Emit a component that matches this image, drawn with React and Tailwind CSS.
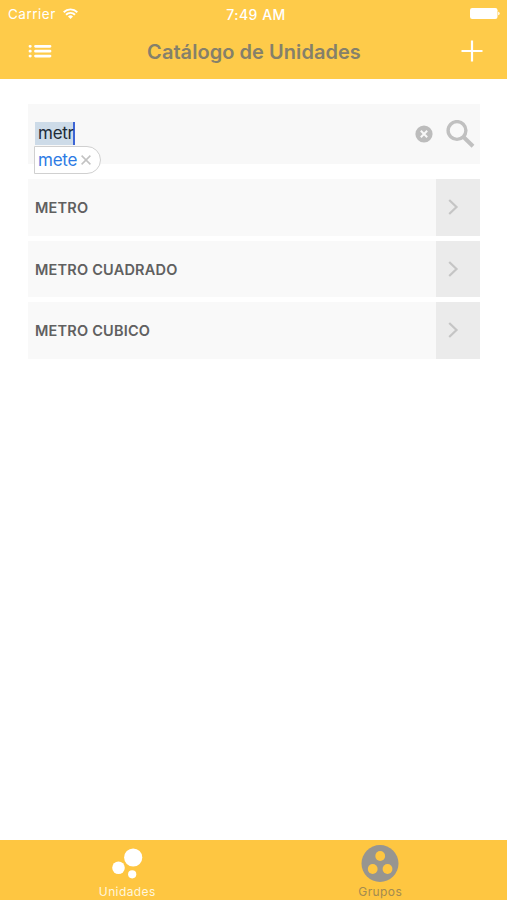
import React, { useState } from 'react';

const units = ['METRO', 'METRO CUADRADO', 'METRO CUBICO'];

const StatusBar = () => (
  <div className="flex h-7 items-center justify-between pl-2 pr-[7px] text-white">
    <div className="flex w-[120px] items-center gap-[7px]">
      <span className="text-[13.5px] tracking-[0.5px]">Carrier</span>
      <svg className="mb-px h-[11px] w-[15px]" viewBox="0 0 15 11" fill="none" stroke="currentColor" strokeWidth="1.9">
        <path d="M.7 4.2a9.7 9.7 0 0 1 13.6 0" />
        <path d="M3 6.7a6.4 6.4 0 0 1 9 0" />
        <path d="M7.5 11 5 8.4a3.6 3.6 0 0 1 5 0z" fill="currentColor" stroke="none" />
      </svg>
    </div>
    <span className="ml-1 text-[14px] font-medium tracking-[0.5px]">7:49 AM</span>
    <div className="flex w-[120px] justify-end">
      <svg className="mb-px h-[11px] w-[30px]" viewBox="0 0 30 11" fill="currentColor">
        <rect width="27.5" height="11" rx="2.2" />
        <path d="M28.2 3.8c2 .5 2 2.9 0 3.4z" />
      </svg>
    </div>
  </div>
);

const NavBar = () => (
  <div className="flex h-[51px] items-start justify-between pl-7 pr-6 text-white">
    <button type="button" className="mt-4 h-[15px] w-6">
      <svg className="h-[15px] w-6" viewBox="0 0 24 15" fill="none" stroke="currentColor" strokeWidth="2.8" strokeLinecap="round">
        <path d="M2 2.3h.3M2 7.2h.3M2 12.1h.3M7.5 2.3h14.5M7.5 7.2h14.5M7.5 12.1h14.5" />
      </svg>
    </button>
    <h1 className="mt-3 mr-[5px] text-[20px] leading-6 font-semibold tracking-[0.05px] text-[#85806a]">Catálogo de Unidades</h1>
    <button type="button" className="mt-3 h-[22px] w-[22px]">
      <svg className="h-[22px] w-[22px]" viewBox="0 0 22 22" fill="none" stroke="currentColor" strokeWidth="2.2">
        <path d="M11 .5v21M.5 11h21" />
      </svg>
    </button>
  </div>
);

const SearchBox = () => {
  const [query, setQuery] = useState('metr');

  return (
    <div className="relative flex h-[60px] items-start bg-[#f8f8f8] pl-[7px]">
      <div className="mt-[18px] flex h-[23px] items-center border-r-2 border-[#3d65d5] bg-[#cddbe8] pl-[3px]">
        <span className="mr-[-0.5px] text-[17px] leading-[23px] tracking-[-0.25px] text-[#202b38]">{query}</span>
      </div>
      <button type="button" onClick={() => setQuery('')} className="mt-[21px] ml-auto h-[18px] w-[18px]">
        <svg className="h-[18px] w-[18px]" viewBox="0 0 18 18">
          <circle cx="9" cy="9" r="8.6" fill="#bcbcbc" />
          <path d="m5.8 5.8 6.4 6.4m0-6.4-6.4 6.4" stroke="#f8f8f8" strokeWidth="2" />
        </svg>
      </button>
      <svg className="mt-4 mr-[5px] ml-[13px] h-[28px] w-[29px]" viewBox="0 0 29 28" fill="none" stroke="#c0c0c0" strokeWidth="3.4">
        <circle cx="11" cy="10.5" r="8.9" />
        <path d="m17 16.5 10 9.7" strokeWidth="4" />
      </svg>
      {/* Autocorrect bubble */}
      <div className="absolute top-[42px] left-[6px] flex h-[28px] w-[67px] items-center gap-[4px] rounded-r-[14px] border border-[#d0d0d0] bg-white pl-[3px]">
        <span className="text-[17px] leading-[23px] tracking-[-0.25px] text-[#2d7be4]">mete</span>
        <svg className="h-[10px] w-[10px]" viewBox="0 0 10 10" stroke="#c2c2c2" strokeWidth="1.5">
          <path d="m.6.6 8.8 8.8m0-8.8L.6 9.4" />
        </svg>
      </div>
    </div>
  );
};

const UnitRow = ({ name }) => (
  <li className="flex h-[56.5px] bg-[#f9f9f9]">
    <span className="flex flex-1 items-center pt-px pl-[7px] text-[14.5px] font-semibold tracking-[0.2px] text-[#606060]">{name}</span>
    <div className="flex w-11 items-center bg-[#ebebeb] pl-3">
      <svg className="mb-px h-4 w-[11px]" viewBox="0 0 11 16" fill="none" stroke="#c5c5c5" strokeWidth="2.2">
        <path d="m1.2 1 7.3 7-7.3 7" />
      </svg>
    </div>
  </li>
);

const TabBar = () => (
  <nav className="grid h-[60px] grid-cols-2 bg-[#fec641] text-[12px] leading-4 tracking-[0.4px]">
    <button type="button" className="flex flex-col items-center pt-1 text-[#fff6dc]">
      <svg className="h-[39px] w-[38px]" viewBox="0 0 38 39" fill="white">
        <circle cx="25.2" cy="13.5" r="9.1" />
        <circle cx="10.5" cy="23.8" r="6.3" />
        <circle cx="24.2" cy="30.3" r="4.1" />
      </svg>
      <span className="mt-px ml-px">Unidades</span>
    </button>
    <button type="button" className="flex flex-col items-center pt-1 text-[#a38b50]">
      <svg className="h-[39px] w-[38px]" viewBox="0 0 38 39">
        <circle cx="19" cy="19.5" r="18.5" fill="#979590" />
        <g fill="#fec641">
          <circle cx="19.2" cy="12" r="4.9" />
          <circle cx="11.7" cy="25" r="4.9" />
          <circle cx="26.5" cy="25" r="4.9" />
        </g>
      </svg>
      <span className="mt-px">Grupos</span>
    </button>
  </nav>
);

const App = () => (
  <div className="flex h-[900px] w-[507px] flex-col overflow-hidden bg-white font-[Inter,sans-serif]">
    <header className="h-[79px] bg-[#fecb4a]">
      <StatusBar />
      <NavBar />
    </header>
    <main className="flex-1 pt-[25px] pr-[27px] pl-7">
      <SearchBox />
      <ul className="mt-[15.4px] flex flex-col gap-[5px]">
        {units.map((name) => (
          <UnitRow key={name} name={name} />
        ))}
      </ul>
    </main>
    <TabBar />
  </div>
);

export default App;
